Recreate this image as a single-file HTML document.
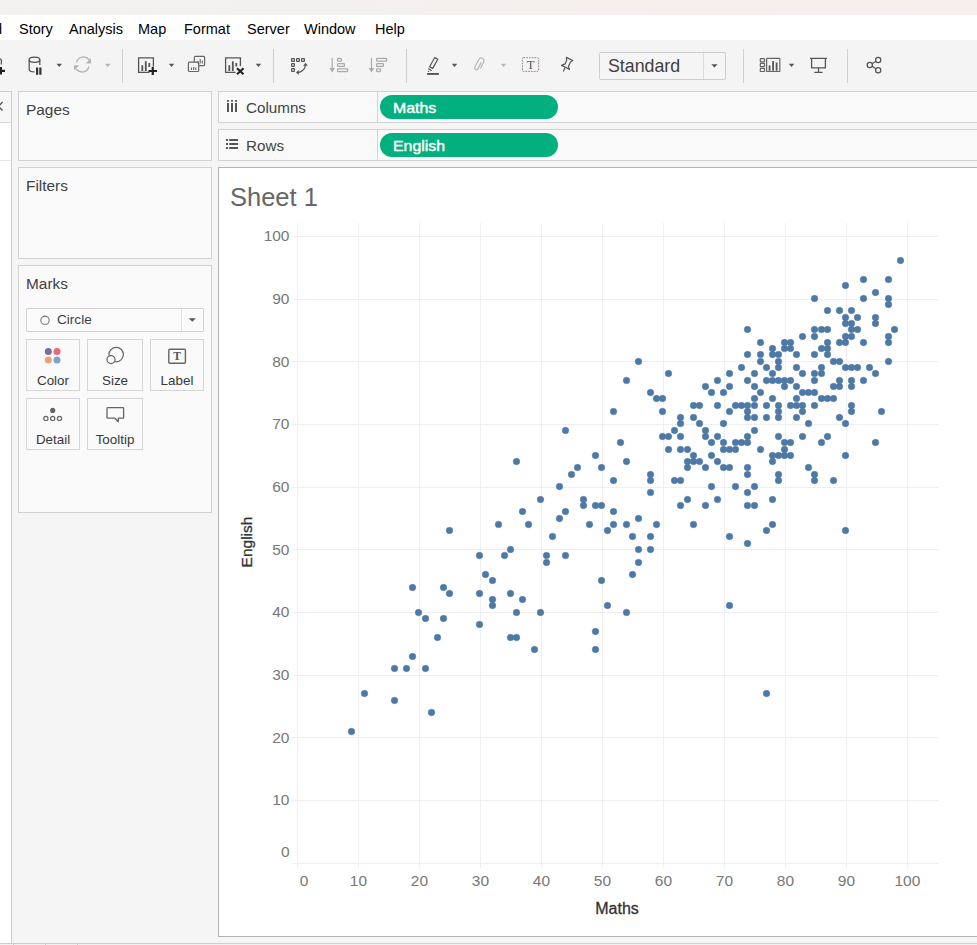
<!DOCTYPE html>
<html><head><meta charset="utf-8">
<style>
*{margin:0;padding:0;box-sizing:border-box}
html,body{width:977px;height:945px;overflow:hidden;background:#f5f5f5;font-family:"Liberation Sans",sans-serif;position:relative}
.a{position:absolute}
#titlebar{left:0;top:0;width:977px;height:15px;background:linear-gradient(90deg,#f3f2f1 0%,#f3f1f0 35%,#f6eeec 70%,#f6efec 100%)}
#menubar{left:0;top:15px;width:977px;height:25px;background:#fff}
.mi{position:absolute;top:19.5px;font-size:14.5px;color:#000;line-height:18px;white-space:nowrap}
#toolbar{left:0;top:40px;width:977px;height:51px;background:#f4f4f4}
.sep{position:absolute;top:49px;width:1px;height:34px;background:#cfcfcf}
.card{position:absolute;background:#fafafa;border:1px solid #d2d2d2}
.ct{position:absolute;left:7px;font-size:15.4px;color:#404040;line-height:18px}
.shelf{position:absolute;left:218px;width:760px;background:#f9f9f9;border:1px solid #d2d2d2;border-right:none}
.pill{position:absolute;left:380px;width:178px;height:24px;border-radius:12px;background:#01b07e;color:#fff;font-size:14.8px;line-height:26.4px;padding-left:12.7px;-webkit-text-stroke:0.4px #fff}
.pill span{display:inline-block;transform:scaleX(1.075);transform-origin:0 50%}
.sl{position:absolute;font-size:15.2px;color:#444;line-height:18px}
#sheet{left:218px;top:167px;width:760px;height:770px;background:#fff;border-top:1px solid #b4b4b4;border-left:1px solid #b4b4b4;border-bottom:1px solid #b4b4b4}
.btn{position:absolute;background:#fafafa;border:1px solid #d6d6d6}
.bl{position:absolute;left:0;right:0;text-align:center;font-size:13.4px;color:#383838;line-height:16px}
</style></head><body>
<div id="titlebar" class="a"></div>
<div id="menubar" class="a"></div>
<div class="mi" style="left:-6px">d</div>
<div class="mi" style="left:19px">Story</div>
<div class="mi" style="left:69px">Analysis</div>
<div class="mi" style="left:138px">Map</div>
<div class="mi" style="left:184px">Format</div>
<div class="mi" style="left:247px">Server</div>
<div class="mi" style="left:304px">Window</div>
<div class="mi" style="left:375px">Help</div>
<div id="toolbar" class="a"></div>
<div class="sep" style="left:122px"></div>
<div class="sep" style="left:273px"></div>
<div class="sep" style="left:406px"></div>
<div class="sep" style="left:743px"></div>
<div class="sep" style="left:847px"></div>

<!-- Standard dropdown -->
<div class="a" style="left:599px;top:52px;width:127px;height:28px;border:1px solid #cdcdcd;border-radius:2px;background:#f5f5f5"></div>
<div class="a" style="left:703px;top:53px;width:1px;height:26px;background:#dcdcdc"></div>
<div class="a" style="left:608px;top:55px;font-size:17.8px;color:#404040;line-height:22px">Standard</div>

<!-- toolbar icons -->
<svg class="a" style="left:0;top:40px" width="977" height="50" viewBox="0 40 977 50">
 <g fill="none" stroke="#555" stroke-width="1.3">
  <!-- partial db+ -->
  <path d="M-5 57.9q6.3 0 6.4 2.4V64.6"/>
 </g>
 <path d="M-3 70.8h8M0.9 67v7.6" stroke="#222" stroke-width="2.2" fill="none"/>
 <!-- db pause -->
 <g fill="none" stroke="#555" stroke-width="1.3">
  <ellipse cx="34.5" cy="59.8" rx="5.3" ry="2.6"/>
  <path d="M29.2 59.8V69.5q0 2.4 5.3 2.4M39.8 59.8V65"/>
 </g>
 <rect x="36" y="67.5" width="2.2" height="7.3" fill="#333"/><rect x="39.3" y="67.5" width="2.2" height="7.3" fill="#333"/>
 <path d="M56.5 63.8h5.5l-2.75 3.2z" fill="#555"/>
 <!-- refresh -->
 <g fill="none" stroke="#b5b5b5" stroke-width="1.3">
  <path d="M76.5 62.5a7.2 7.2 0 0 1 13-2.2M89 66.5a7.2 7.2 0 0 1-13 2.2"/>
 </g>
 <path d="M91 58.2v5.3h-5.3zM74 70.5v-5.3h5.3z" fill="#b5b5b5"/>
 <path d="M105 63.8h5.5l-2.75 3.2z" fill="#b5b5b5"/>
 <!-- new worksheet -->
 <g fill="none" stroke="#555" stroke-width="1.3">
  <path d="M149.5 72.3H138.6V57.8h14.8v8.5"/>
 </g>
 <path d="M142.3 65.2v5.8M145.8 61.2v9.8M149.3 63v4" stroke="#555" stroke-width="1.8"/>
 <path d="M148.5 71h8.5M152.75 66.8v8.2" stroke="#222" stroke-width="2.2"/>
 <path d="M168.8 63.8h5.5l-2.75 3.2z" fill="#555"/>
 <!-- duplicate -->
 <g fill="#f4f4f4" stroke="#666" stroke-width="1.2">
  <rect x="194.3" y="56.4" width="10.3" height="9.3" rx="1"/>
  <rect x="188.4" y="62.2" width="10.3" height="9.3" rx="1"/>
 </g>
 <path d="M198 63.5v-2.5M200.2 63.5v-4.5M202.3 63.5v-3M191.5 70v-2.5M193.7 70v-3M195.8 70v-2.5" stroke="#666" stroke-width="1.1"/>
 <!-- clear sheet -->
 <path d="M235.5 72.3H225.6V57.8h14.8v8.5" fill="none" stroke="#555" stroke-width="1.3"/>
 <path d="M229.3 65.2v5.8M232.8 61.2v9.8M236.3 63v3.5" stroke="#555" stroke-width="1.8"/>
 <path d="M237 68.3l6.5 6M243.5 68.3l-6.5 6" stroke="#222" stroke-width="2.1"/>
 <path d="M255.7 63.8h5.5l-2.75 3.2z" fill="#555"/>
 <!-- swap -->
 <g fill="none" stroke="#555" stroke-width="1.2">
  <rect x="291.6" y="58.6" width="2.8" height="2.8" rx=".5"/><rect x="296.6" y="58.6" width="2.8" height="2.8" rx=".5"/><rect x="301.6" y="58.6" width="2.8" height="2.8" rx=".5"/>
  <rect x="291.6" y="63.6" width="2.8" height="2.8" rx=".5"/><rect x="291.6" y="68.6" width="2.8" height="2.8" rx=".5"/>
  <path d="M298 72.6Q304.6 71 305.5 65.3"/>
 </g>
 <path d="M305.5 62.8L307.9 65.8L303.1 65.8ZM296 72.5L298.7 70.1L298.7 74.9Z" fill="#555"/>
 <!-- sort asc -->
 <g fill="none" stroke="#aaa" stroke-width="1.2">
  <path d="M332.2 58v11"/>
  <rect x="337.6" y="58.4" width="3.8" height="2.8" rx=".5"/><rect x="337.6" y="63.6" width="6.8" height="2.8" rx=".5"/><rect x="337.6" y="68.8" width="10" height="2.8" rx=".5"/>
 </g>
 <path d="M329.5 68h5.4l-2.7 4.4z" fill="#aaa"/>
 <!-- sort desc -->
 <g fill="none" stroke="#aaa" stroke-width="1.2">
  <path d="M371.5 58v11"/>
  <rect x="376.6" y="58.4" width="10" height="2.8" rx=".5"/><rect x="376.6" y="63.6" width="6.8" height="2.8" rx=".5"/><rect x="376.6" y="68.8" width="3.8" height="2.8" rx=".5"/>
 </g>
 <path d="M368.8 68h5.4l-2.7 4.4z" fill="#aaa"/>
 <!-- highlighter -->
 <path d="M434.8 57.5L437.8 59.2L432.7 68.4L429.6 66.7Z" fill="none" stroke="#555" stroke-width="1.2" stroke-linejoin="round"/><path d="M428.6 68.4L428.9 69.6L431.7 70.7Z" fill="#555" stroke="#555" stroke-width=".8"/><circle cx="428.5" cy="71.4" r=".7" fill="#555"/>
 <rect x="427.1" y="73" width="11.8" height="1.9" fill="#555"/>
 <path d="M451.8 63.8h5.5l-2.75 3.2z" fill="#555"/>
 <!-- paperclip -->
 <path d="M480 61.5V69a1.75 1.75 0 0 1-3.5 0V60.2a2.75 2.75 0 0 1 5.5 0V67.5" fill="none" stroke="#b5b5b5" stroke-width="1.15" transform="rotate(27 479.2 64.6)"/>
 <path d="M500.8 63.8h5.5l-2.75 3.2z" fill="#b8b8b8"/>
 <!-- text box -->
 <rect x="522.4" y="57.7" width="16.2" height="13.7" rx="1" fill="none" stroke="#8a8a8a" stroke-width="1" stroke-dasharray="1.7 1.1"/>
 <text x="530.6" y="69.2" font-family="Liberation Serif" font-size="12.7" fill="#555" text-anchor="middle">T</text>
 <!-- pin -->
 <path d="M566.4 57.4L572.8 60.5L570.5 61.9L568.5 66.3L569.4 69.4L565.6 67.3L561.5 65.4L565.1 63.9L566.6 60.5Z M565 67.8L563.3 71.4" fill="none" stroke="#555" stroke-width="1.2" stroke-linejoin="round"/>
 <!-- standard arrow -->
 <path d="M711.3 64.2h6.3l-3.15 3.3z" fill="#555"/>
 <!-- show cards -->
 <g fill="none" stroke="#666" stroke-width="1.2">
  <rect x="760.3" y="58.6" width="4.2" height="3.2" rx=".6"/><rect x="760.3" y="63.4" width="4.2" height="3.2" rx=".6"/><rect x="760.3" y="68.3" width="4.2" height="3.2" rx=".6"/>
  <rect x="766.6" y="58.3" width="13.2" height="13.2" rx=".6"/>
 </g>
 <path d="M769.6 70.8v-5.2M773.1 70.8v-9.8M776.6 70.8v-8.2" stroke="#555" stroke-width="1.8"/>
 <path d="M788.8 63.8h5.5l-2.75 3.2z" fill="#555"/>
 <!-- presentation -->
 <g fill="none" stroke="#555" stroke-width="1.3">
  <path d="M810 58.3h17M811.6 58.3v9.5h13.8v-9.5M818.5 67.8v4.5M814.3 72.4h8.4"/>
 </g>
 <!-- share -->
 <g fill="none" stroke="#555" stroke-width="1.3">
  <circle cx="878.2" cy="60" r="2.6"/><circle cx="869.8" cy="65" r="2.6"/><circle cx="878.2" cy="70.2" r="2.6"/>
  <path d="M872.1 63.7l3.8-2.4M872.1 66.3l3.8 2.5"/>
 </g>
</svg>

<!-- left sliver -->
<div class="a" style="left:-1px;top:91px;width:13px;height:852px;background:#fff;border:1px solid #cccccc;border-left:none;border-bottom:none"></div>
<div class="a" style="left:0;top:92px;width:11px;height:31px;background:#f7f7f7;border-bottom:1px solid #d8d8d8"></div>
<div class="a" style="left:0;top:160px;width:11px;height:1px;background:#e6e6e6"></div>
<svg class="a" style="left:0;top:95px" width="11" height="20" viewBox="0 95 11 20"><path d="M2.6 102.1L-1.6 106.4L2.6 110.6" stroke="#555" stroke-width="1.4" fill="none"/></svg>
<div class="a" style="left:0;top:943px;width:977px;height:1px;background:#cccccc"></div>
<div class="a" style="left:0;top:944px;width:977px;height:1px;background:#f0f0f0"></div><div class="a" style="left:13px;top:944px;width:1px;height:1px;background:#ccc"></div><div class="a" style="left:45px;top:944px;width:1px;height:1px;background:#ccc"></div><div class="a" style="left:77px;top:944px;width:1px;height:1px;background:#ccc"></div>

<div class="card" style="left:18px;top:91px;width:194px;height:70px"><div class="ct" style="top:9px">Pages</div></div>
<div class="card" style="left:18px;top:167px;width:194px;height:92px"><div class="ct" style="top:9px">Filters</div></div>
<div class="card" style="left:18px;top:265px;width:194px;height:248px"><div class="ct" style="top:9px">Marks</div></div>

<!-- marks dropdown -->
<div class="a" style="left:26px;top:308px;width:178px;height:24px;background:#fbfbfb;border:1px solid #d0d0d0;border-radius:2px"></div>
<div class="a" style="left:181px;top:309px;width:1px;height:22px;background:#e0e0e0"></div>
<div class="a" style="left:57px;top:312px;font-size:13.6px;color:#404040;line-height:16px">Circle</div>
<svg class="a" style="left:0;top:300px" width="212" height="160" viewBox="0 300 212 160">
 <circle cx="45" cy="320.3" r="4.2" fill="none" stroke="#777" stroke-width="1.1"/>
 <path d="M188.8 318.3h7l-3.5 3.5z" fill="#555"/>
</svg>
<div class="btn" style="left:26px;top:339px;width:54px;height:52px"><div class="bl" style="top:33px">Color</div></div>
<div class="btn" style="left:87px;top:339px;width:56px;height:52px"><div class="bl" style="top:33px">Size</div></div>
<div class="btn" style="left:150px;top:339px;width:54px;height:52px"><div class="bl" style="top:33px">Label</div></div>
<div class="btn" style="left:26px;top:398px;width:54px;height:52px"><div class="bl" style="top:33px">Detail</div></div>
<div class="btn" style="left:87px;top:398px;width:56px;height:52px"><div class="bl" style="top:33px">Tooltip</div></div>
<svg class="a" style="left:0;top:330px" width="212" height="130" viewBox="0 330 212 130">
 <circle cx="48.3" cy="351.6" r="3.5" fill="#7f6b9b"/>
 <circle cx="57" cy="351.6" r="3.5" fill="#e8697d"/>
 <circle cx="48.3" cy="360" r="3.5" fill="#eea072"/>
 <circle cx="57" cy="360" r="3.5" fill="#7ea3cc"/>
 <circle cx="116.2" cy="354.6" r="7.2" fill="none" stroke="#666" stroke-width="1.2"/>
 <circle cx="111" cy="359.6" r="4" fill="#f9f9f9" stroke="#666" stroke-width="1.2"/>
 <rect x="168.8" y="349.3" width="16.6" height="13.9" rx="1" fill="none" stroke="#666" stroke-width="1.4"/>
 <text x="177.1" y="360.3" font-family="Liberation Serif" font-size="11.5" font-weight="bold" fill="#555" text-anchor="middle">T</text>
 <circle cx="52.7" cy="410.4" r="2.6" fill="#666"/>
 <circle cx="45.9" cy="418.4" r="2.1" fill="none" stroke="#666" stroke-width="1.2"/>
 <circle cx="52.7" cy="418.4" r="2.1" fill="none" stroke="#666" stroke-width="1.2"/>
 <circle cx="59.5" cy="418.4" r="2.1" fill="none" stroke="#666" stroke-width="1.2"/>
 <path d="M107.8 407.6H122.8a.8 .8 0 0 1 .8 .8V417.4a.8 .8 0 0 1-.8 .8H118.3V421.8L114.9 418.2H107.8a.8 .8 0 0 1-.8-.8V408.4a.8 .8 0 0 1 .8-.8Z" fill="none" stroke="#666" stroke-width="1.3" stroke-linejoin="round"/>
</svg>

<div class="shelf" style="top:91px;height:32px"></div>
<div class="shelf" style="top:129px;height:32px"></div>
<div class="a" style="left:377px;top:92px;width:1px;height:30px;background:#d4d4d4"></div>
<div class="a" style="left:377px;top:130px;width:1px;height:30px;background:#d4d4d4"></div>
<div class="sl" style="left:246px;top:98.8px">Columns</div>
<div class="sl" style="left:246px;top:136.8px">Rows</div>
<svg class="a" style="left:222px;top:95px" width="20" height="60" viewBox="222 95 20 60">
 <path d="M228 103v9M232 103v9M236 103v9M228 100.1v1.7M232 100.1v1.7M236 100.1v1.7" stroke="#555" stroke-width="2"/>
 <path d="M226 140h2M226 144h2M226 148h2M229.2 140h8.9M229.2 144h8.9M229.2 148h8.9" stroke="#555" stroke-width="1.8"/>
</svg>
<div class="pill" style="top:95px"><span>Maths</span></div>
<div class="pill" style="top:133px"><span>English</span></div>

<div id="sheet" class="a"></div>
<div class="a" style="left:230px;top:182px;font-size:25.5px;color:#666;line-height:30px">Sheet 1</div>

<svg class="a" style="left:0;top:0" width="977" height="945" viewBox="0 0 977 945">
<path d="M297.5 223V868M358.5 223V868M419.5 223V868M480.5 223V868M541.5 223V868M602.5 223V868M663.5 223V868M724.5 223V868M785.5 223V868M846.5 223V868M907.5 223V868M292 863.5H938M292 800.5H938M292 737.5H938M292 675.5H938M292 612.5H938M292 549.5H938M292 487.5H938M292 424.5H938M292 361.5H938M292 299.5H938M292 236.5H938" stroke="#efefef" stroke-width="1" fill="none"/>
<g font-family="Liberation Sans" font-size="15.5" fill="#787878"><text x="289.5" y="856.6" text-anchor="end">0</text><text x="289.5" y="805.2" text-anchor="end">10</text><text x="289.5" y="742.6" text-anchor="end">20</text><text x="289.5" y="679.9" text-anchor="end">30</text><text x="289.5" y="617.2" text-anchor="end">40</text><text x="289.5" y="554.5" text-anchor="end">50</text><text x="289.5" y="491.9" text-anchor="end">60</text><text x="289.5" y="429.2" text-anchor="end">70</text><text x="289.5" y="366.5" text-anchor="end">80</text><text x="289.5" y="303.9" text-anchor="end">90</text><text x="289.5" y="241.2" text-anchor="end">100</text><text x="304.0" y="885.8" text-anchor="middle">0</text><text x="358.4" y="885.8" text-anchor="middle">10</text><text x="419.4" y="885.8" text-anchor="middle">20</text><text x="480.4" y="885.8" text-anchor="middle">30</text><text x="541.4" y="885.8" text-anchor="middle">40</text><text x="602.4" y="885.8" text-anchor="middle">50</text><text x="663.4" y="885.8" text-anchor="middle">60</text><text x="724.4" y="885.8" text-anchor="middle">70</text><text x="785.4" y="885.8" text-anchor="middle">80</text><text x="846.4" y="885.8" text-anchor="middle">90</text><text x="907.4" y="885.8" text-anchor="middle">100</text></g>
<text x="617" y="914" text-anchor="middle" font-family="Liberation Sans" font-size="16" fill="#333" stroke="#333" stroke-width="0.3">Maths</text>
<text transform="translate(252 542) rotate(-90)" text-anchor="middle" font-family="Liberation Sans" font-size="15.5" fill="#333" stroke="#333" stroke-width="0.3">English</text>
<g fill="#4e79a7" stroke="#4773a1" stroke-width="0.5"><circle cx="351.5" cy="731.5" r="3.25"/><circle cx="364.5" cy="693.5" r="3.25"/><circle cx="394.5" cy="700.5" r="3.25"/><circle cx="394.5" cy="668.5" r="3.25"/><circle cx="406.5" cy="668.5" r="3.25"/><circle cx="412.5" cy="656.5" r="3.25"/><circle cx="412.5" cy="587.5" r="3.25"/><circle cx="418.5" cy="612.5" r="3.25"/><circle cx="425.5" cy="668.5" r="3.25"/><circle cx="425.5" cy="618.5" r="3.25"/><circle cx="431.5" cy="712.5" r="3.25"/><circle cx="437.5" cy="637.5" r="3.25"/><circle cx="443.5" cy="618.5" r="3.25"/><circle cx="443.5" cy="587.5" r="3.25"/><circle cx="449.5" cy="593.5" r="3.25"/><circle cx="449.5" cy="530.5" r="3.25"/><circle cx="479.5" cy="624.5" r="3.25"/><circle cx="479.5" cy="593.5" r="3.25"/><circle cx="479.5" cy="555.5" r="3.25"/><circle cx="485.5" cy="574.5" r="3.25"/><circle cx="492.5" cy="605.5" r="3.25"/><circle cx="492.5" cy="599.5" r="3.25"/><circle cx="492.5" cy="580.5" r="3.25"/><circle cx="498.5" cy="524.5" r="3.25"/><circle cx="504.5" cy="555.5" r="3.25"/><circle cx="510.5" cy="637.5" r="3.25"/><circle cx="510.5" cy="593.5" r="3.25"/><circle cx="510.5" cy="549.5" r="3.25"/><circle cx="516.5" cy="637.5" r="3.25"/><circle cx="516.5" cy="612.5" r="3.25"/><circle cx="516.5" cy="461.5" r="3.25"/><circle cx="522.5" cy="599.5" r="3.25"/><circle cx="522.5" cy="511.5" r="3.25"/><circle cx="528.5" cy="524.5" r="3.25"/><circle cx="534.5" cy="649.5" r="3.25"/><circle cx="540.5" cy="612.5" r="3.25"/><circle cx="540.5" cy="499.5" r="3.25"/><circle cx="546.5" cy="562.5" r="3.25"/><circle cx="546.5" cy="555.5" r="3.25"/><circle cx="552.5" cy="536.5" r="3.25"/><circle cx="559.5" cy="518.5" r="3.25"/><circle cx="559.5" cy="486.5" r="3.25"/><circle cx="565.5" cy="555.5" r="3.25"/><circle cx="565.5" cy="511.5" r="3.25"/><circle cx="565.5" cy="430.5" r="3.25"/><circle cx="571.5" cy="474.5" r="3.25"/><circle cx="577.5" cy="467.5" r="3.25"/><circle cx="583.5" cy="505.5" r="3.25"/><circle cx="583.5" cy="499.5" r="3.25"/><circle cx="589.5" cy="524.5" r="3.25"/><circle cx="595.5" cy="649.5" r="3.25"/><circle cx="595.5" cy="631.5" r="3.25"/><circle cx="595.5" cy="505.5" r="3.25"/><circle cx="595.5" cy="455.5" r="3.25"/><circle cx="601.5" cy="580.5" r="3.25"/><circle cx="601.5" cy="505.5" r="3.25"/><circle cx="601.5" cy="467.5" r="3.25"/><circle cx="607.5" cy="605.5" r="3.25"/><circle cx="607.5" cy="530.5" r="3.25"/><circle cx="613.5" cy="524.5" r="3.25"/><circle cx="613.5" cy="511.5" r="3.25"/><circle cx="613.5" cy="480.5" r="3.25"/><circle cx="613.5" cy="411.5" r="3.25"/><circle cx="620.5" cy="442.5" r="3.25"/><circle cx="626.5" cy="612.5" r="3.25"/><circle cx="626.5" cy="524.5" r="3.25"/><circle cx="626.5" cy="461.5" r="3.25"/><circle cx="626.5" cy="380.5" r="3.25"/><circle cx="632.5" cy="574.5" r="3.25"/><circle cx="632.5" cy="536.5" r="3.25"/><circle cx="638.5" cy="562.5" r="3.25"/><circle cx="638.5" cy="549.5" r="3.25"/><circle cx="638.5" cy="518.5" r="3.25"/><circle cx="638.5" cy="361.5" r="3.25"/><circle cx="650.5" cy="549.5" r="3.25"/><circle cx="650.5" cy="536.5" r="3.25"/><circle cx="650.5" cy="492.5" r="3.25"/><circle cx="650.5" cy="480.5" r="3.25"/><circle cx="650.5" cy="474.5" r="3.25"/><circle cx="650.5" cy="392.5" r="3.25"/><circle cx="656.5" cy="524.5" r="3.25"/><circle cx="656.5" cy="398.5" r="3.25"/><circle cx="662.5" cy="436.5" r="3.25"/><circle cx="662.5" cy="411.5" r="3.25"/><circle cx="662.5" cy="398.5" r="3.25"/><circle cx="668.5" cy="449.5" r="3.25"/><circle cx="668.5" cy="436.5" r="3.25"/><circle cx="668.5" cy="373.5" r="3.25"/><circle cx="674.5" cy="480.5" r="3.25"/><circle cx="674.5" cy="430.5" r="3.25"/><circle cx="680.5" cy="505.5" r="3.25"/><circle cx="680.5" cy="480.5" r="3.25"/><circle cx="680.5" cy="449.5" r="3.25"/><circle cx="680.5" cy="436.5" r="3.25"/><circle cx="680.5" cy="423.5" r="3.25"/><circle cx="680.5" cy="417.5" r="3.25"/><circle cx="687.5" cy="499.5" r="3.25"/><circle cx="687.5" cy="467.5" r="3.25"/><circle cx="687.5" cy="461.5" r="3.25"/><circle cx="687.5" cy="449.5" r="3.25"/><circle cx="693.5" cy="524.5" r="3.25"/><circle cx="693.5" cy="461.5" r="3.25"/><circle cx="693.5" cy="455.5" r="3.25"/><circle cx="693.5" cy="417.5" r="3.25"/><circle cx="693.5" cy="405.5" r="3.25"/><circle cx="699.5" cy="461.5" r="3.25"/><circle cx="699.5" cy="423.5" r="3.25"/><circle cx="699.5" cy="405.5" r="3.25"/><circle cx="705.5" cy="505.5" r="3.25"/><circle cx="705.5" cy="467.5" r="3.25"/><circle cx="705.5" cy="436.5" r="3.25"/><circle cx="705.5" cy="430.5" r="3.25"/><circle cx="705.5" cy="386.5" r="3.25"/><circle cx="711.5" cy="486.5" r="3.25"/><circle cx="711.5" cy="455.5" r="3.25"/><circle cx="711.5" cy="442.5" r="3.25"/><circle cx="711.5" cy="392.5" r="3.25"/><circle cx="717.5" cy="499.5" r="3.25"/><circle cx="717.5" cy="461.5" r="3.25"/><circle cx="717.5" cy="436.5" r="3.25"/><circle cx="717.5" cy="405.5" r="3.25"/><circle cx="717.5" cy="380.5" r="3.25"/><circle cx="723.5" cy="467.5" r="3.25"/><circle cx="723.5" cy="449.5" r="3.25"/><circle cx="723.5" cy="442.5" r="3.25"/><circle cx="723.5" cy="423.5" r="3.25"/><circle cx="723.5" cy="392.5" r="3.25"/><circle cx="729.5" cy="605.5" r="3.25"/><circle cx="729.5" cy="536.5" r="3.25"/><circle cx="729.5" cy="467.5" r="3.25"/><circle cx="729.5" cy="449.5" r="3.25"/><circle cx="729.5" cy="411.5" r="3.25"/><circle cx="729.5" cy="386.5" r="3.25"/><circle cx="729.5" cy="373.5" r="3.25"/><circle cx="735.5" cy="486.5" r="3.25"/><circle cx="735.5" cy="449.5" r="3.25"/><circle cx="735.5" cy="442.5" r="3.25"/><circle cx="735.5" cy="405.5" r="3.25"/><circle cx="741.5" cy="442.5" r="3.25"/><circle cx="741.5" cy="405.5" r="3.25"/><circle cx="741.5" cy="367.5" r="3.25"/><circle cx="747.5" cy="543.5" r="3.25"/><circle cx="747.5" cy="505.5" r="3.25"/><circle cx="747.5" cy="492.5" r="3.25"/><circle cx="747.5" cy="474.5" r="3.25"/><circle cx="747.5" cy="467.5" r="3.25"/><circle cx="747.5" cy="442.5" r="3.25"/><circle cx="747.5" cy="436.5" r="3.25"/><circle cx="747.5" cy="417.5" r="3.25"/><circle cx="747.5" cy="411.5" r="3.25"/><circle cx="747.5" cy="405.5" r="3.25"/><circle cx="747.5" cy="380.5" r="3.25"/><circle cx="747.5" cy="354.5" r="3.25"/><circle cx="747.5" cy="329.5" r="3.25"/><circle cx="754.5" cy="505.5" r="3.25"/><circle cx="754.5" cy="486.5" r="3.25"/><circle cx="754.5" cy="430.5" r="3.25"/><circle cx="754.5" cy="417.5" r="3.25"/><circle cx="754.5" cy="405.5" r="3.25"/><circle cx="754.5" cy="398.5" r="3.25"/><circle cx="754.5" cy="386.5" r="3.25"/><circle cx="754.5" cy="373.5" r="3.25"/><circle cx="760.5" cy="449.5" r="3.25"/><circle cx="760.5" cy="392.5" r="3.25"/><circle cx="760.5" cy="361.5" r="3.25"/><circle cx="760.5" cy="354.5" r="3.25"/><circle cx="760.5" cy="342.5" r="3.25"/><circle cx="766.5" cy="693.5" r="3.25"/><circle cx="766.5" cy="530.5" r="3.25"/><circle cx="766.5" cy="417.5" r="3.25"/><circle cx="766.5" cy="405.5" r="3.25"/><circle cx="766.5" cy="380.5" r="3.25"/><circle cx="766.5" cy="367.5" r="3.25"/><circle cx="772.5" cy="524.5" r="3.25"/><circle cx="772.5" cy="499.5" r="3.25"/><circle cx="772.5" cy="461.5" r="3.25"/><circle cx="772.5" cy="455.5" r="3.25"/><circle cx="772.5" cy="398.5" r="3.25"/><circle cx="772.5" cy="380.5" r="3.25"/><circle cx="772.5" cy="373.5" r="3.25"/><circle cx="772.5" cy="354.5" r="3.25"/><circle cx="772.5" cy="348.5" r="3.25"/><circle cx="778.5" cy="480.5" r="3.25"/><circle cx="778.5" cy="474.5" r="3.25"/><circle cx="778.5" cy="455.5" r="3.25"/><circle cx="778.5" cy="436.5" r="3.25"/><circle cx="778.5" cy="417.5" r="3.25"/><circle cx="778.5" cy="411.5" r="3.25"/><circle cx="778.5" cy="405.5" r="3.25"/><circle cx="778.5" cy="380.5" r="3.25"/><circle cx="778.5" cy="367.5" r="3.25"/><circle cx="778.5" cy="361.5" r="3.25"/><circle cx="778.5" cy="354.5" r="3.25"/><circle cx="784.5" cy="455.5" r="3.25"/><circle cx="784.5" cy="449.5" r="3.25"/><circle cx="784.5" cy="442.5" r="3.25"/><circle cx="784.5" cy="386.5" r="3.25"/><circle cx="784.5" cy="380.5" r="3.25"/><circle cx="784.5" cy="348.5" r="3.25"/><circle cx="784.5" cy="342.5" r="3.25"/><circle cx="790.5" cy="455.5" r="3.25"/><circle cx="790.5" cy="442.5" r="3.25"/><circle cx="790.5" cy="405.5" r="3.25"/><circle cx="790.5" cy="380.5" r="3.25"/><circle cx="790.5" cy="348.5" r="3.25"/><circle cx="790.5" cy="342.5" r="3.25"/><circle cx="796.5" cy="417.5" r="3.25"/><circle cx="796.5" cy="405.5" r="3.25"/><circle cx="796.5" cy="398.5" r="3.25"/><circle cx="796.5" cy="386.5" r="3.25"/><circle cx="796.5" cy="367.5" r="3.25"/><circle cx="796.5" cy="354.5" r="3.25"/><circle cx="802.5" cy="436.5" r="3.25"/><circle cx="802.5" cy="411.5" r="3.25"/><circle cx="802.5" cy="405.5" r="3.25"/><circle cx="802.5" cy="392.5" r="3.25"/><circle cx="802.5" cy="373.5" r="3.25"/><circle cx="802.5" cy="336.5" r="3.25"/><circle cx="808.5" cy="467.5" r="3.25"/><circle cx="808.5" cy="423.5" r="3.25"/><circle cx="808.5" cy="392.5" r="3.25"/><circle cx="814.5" cy="480.5" r="3.25"/><circle cx="814.5" cy="474.5" r="3.25"/><circle cx="814.5" cy="405.5" r="3.25"/><circle cx="814.5" cy="392.5" r="3.25"/><circle cx="814.5" cy="380.5" r="3.25"/><circle cx="814.5" cy="373.5" r="3.25"/><circle cx="814.5" cy="354.5" r="3.25"/><circle cx="814.5" cy="336.5" r="3.25"/><circle cx="814.5" cy="329.5" r="3.25"/><circle cx="814.5" cy="298.5" r="3.25"/><circle cx="821.5" cy="442.5" r="3.25"/><circle cx="821.5" cy="398.5" r="3.25"/><circle cx="821.5" cy="373.5" r="3.25"/><circle cx="821.5" cy="367.5" r="3.25"/><circle cx="821.5" cy="348.5" r="3.25"/><circle cx="821.5" cy="329.5" r="3.25"/><circle cx="827.5" cy="436.5" r="3.25"/><circle cx="827.5" cy="398.5" r="3.25"/><circle cx="827.5" cy="354.5" r="3.25"/><circle cx="827.5" cy="348.5" r="3.25"/><circle cx="827.5" cy="342.5" r="3.25"/><circle cx="827.5" cy="329.5" r="3.25"/><circle cx="827.5" cy="310.5" r="3.25"/><circle cx="833.5" cy="480.5" r="3.25"/><circle cx="833.5" cy="398.5" r="3.25"/><circle cx="833.5" cy="386.5" r="3.25"/><circle cx="833.5" cy="361.5" r="3.25"/><circle cx="839.5" cy="417.5" r="3.25"/><circle cx="839.5" cy="386.5" r="3.25"/><circle cx="839.5" cy="380.5" r="3.25"/><circle cx="839.5" cy="361.5" r="3.25"/><circle cx="839.5" cy="342.5" r="3.25"/><circle cx="839.5" cy="310.5" r="3.25"/><circle cx="845.5" cy="530.5" r="3.25"/><circle cx="845.5" cy="455.5" r="3.25"/><circle cx="845.5" cy="423.5" r="3.25"/><circle cx="845.5" cy="367.5" r="3.25"/><circle cx="845.5" cy="342.5" r="3.25"/><circle cx="845.5" cy="336.5" r="3.25"/><circle cx="845.5" cy="323.5" r="3.25"/><circle cx="845.5" cy="317.5" r="3.25"/><circle cx="845.5" cy="285.5" r="3.25"/><circle cx="851.5" cy="411.5" r="3.25"/><circle cx="851.5" cy="405.5" r="3.25"/><circle cx="851.5" cy="386.5" r="3.25"/><circle cx="851.5" cy="380.5" r="3.25"/><circle cx="851.5" cy="367.5" r="3.25"/><circle cx="851.5" cy="336.5" r="3.25"/><circle cx="851.5" cy="329.5" r="3.25"/><circle cx="851.5" cy="323.5" r="3.25"/><circle cx="851.5" cy="310.5" r="3.25"/><circle cx="857.5" cy="367.5" r="3.25"/><circle cx="857.5" cy="329.5" r="3.25"/><circle cx="857.5" cy="317.5" r="3.25"/><circle cx="863.5" cy="380.5" r="3.25"/><circle cx="863.5" cy="342.5" r="3.25"/><circle cx="863.5" cy="298.5" r="3.25"/><circle cx="863.5" cy="279.5" r="3.25"/><circle cx="869.5" cy="367.5" r="3.25"/><circle cx="875.5" cy="442.5" r="3.25"/><circle cx="875.5" cy="373.5" r="3.25"/><circle cx="875.5" cy="323.5" r="3.25"/><circle cx="875.5" cy="317.5" r="3.25"/><circle cx="875.5" cy="292.5" r="3.25"/><circle cx="881.5" cy="411.5" r="3.25"/><circle cx="888.5" cy="361.5" r="3.25"/><circle cx="888.5" cy="342.5" r="3.25"/><circle cx="888.5" cy="336.5" r="3.25"/><circle cx="888.5" cy="304.5" r="3.25"/><circle cx="888.5" cy="298.5" r="3.25"/><circle cx="888.5" cy="279.5" r="3.25"/><circle cx="894.5" cy="329.5" r="3.25"/><circle cx="900.5" cy="260.5" r="3.25"/></g>
</svg>
</body></html>
